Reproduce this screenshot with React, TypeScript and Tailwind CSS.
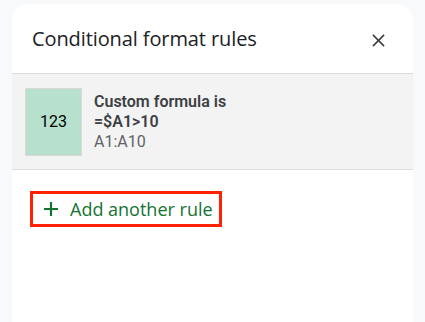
import React from "react";

export default function App() {
  return (
    <div className="w-[425px] h-[322px] bg-[#f8f9fa] pt-[4px] px-[12px] overflow-hidden" style={{ fontFamily: "Roboto, 'Noto Sans', sans-serif" }}>
      <div className="bg-white rounded-t-[16px] h-full flex flex-col">
        <div className="h-[70px] flex items-center justify-between pl-[20px] pr-[28px] border-b border-[#dadce0]">
          <div className="text-[20px] text-[#202124] pt-[1px]" style={{ fontFamily: "'Open Sans', Roboto, sans-serif", letterSpacing: "-0.1px" }}>
            Conditional format rules
          </div>
          <svg width="13" height="13" viewBox="0 0 14 14" className="mt-[4px]">
            <path d="M1 1L13 13M13 1L1 13" stroke="#3c4043" strokeWidth="1.7" />
          </svg>
        </div>
        <div className="h-[96px] bg-[#f3f3f3] border-b border-[#dadce0] flex items-center pl-[13px]">
          <div className="w-[57px] h-[68px] bg-[#b7e1cd] border border-[#d9d9d9] flex items-center justify-center text-[16px] text-black">
            123
          </div>
          <div className="ml-[12px] flex flex-col text-[16px] leading-[20px]">
            <div className="font-semibold text-[#3c4043]">Custom formula is</div>
            <div className="font-semibold text-[#3c4043]">=$A1&gt;10</div>
            <div className="text-[#5f6368]">A1:A10</div>
          </div>
        </div>
        <div className="pl-[18px] pt-[21px]">
          <div className="inline-flex items-center h-[36px] w-[192px] border-[3px] border-[#ff2200] pl-[11px]">
            <svg width="14" height="14" viewBox="0 0 14 14">
              <path d="M7 0V14M0 7H14" stroke="#137333" strokeWidth="2.2" />
            </svg>
            <span className="ml-[12px] text-[18px] font-medium text-[#137333]" style={{ fontFamily: "'Open Sans', Roboto, sans-serif" }}>
              Add another rule
            </span>
          </div>
        </div>
      </div>
    </div>
  );
}
